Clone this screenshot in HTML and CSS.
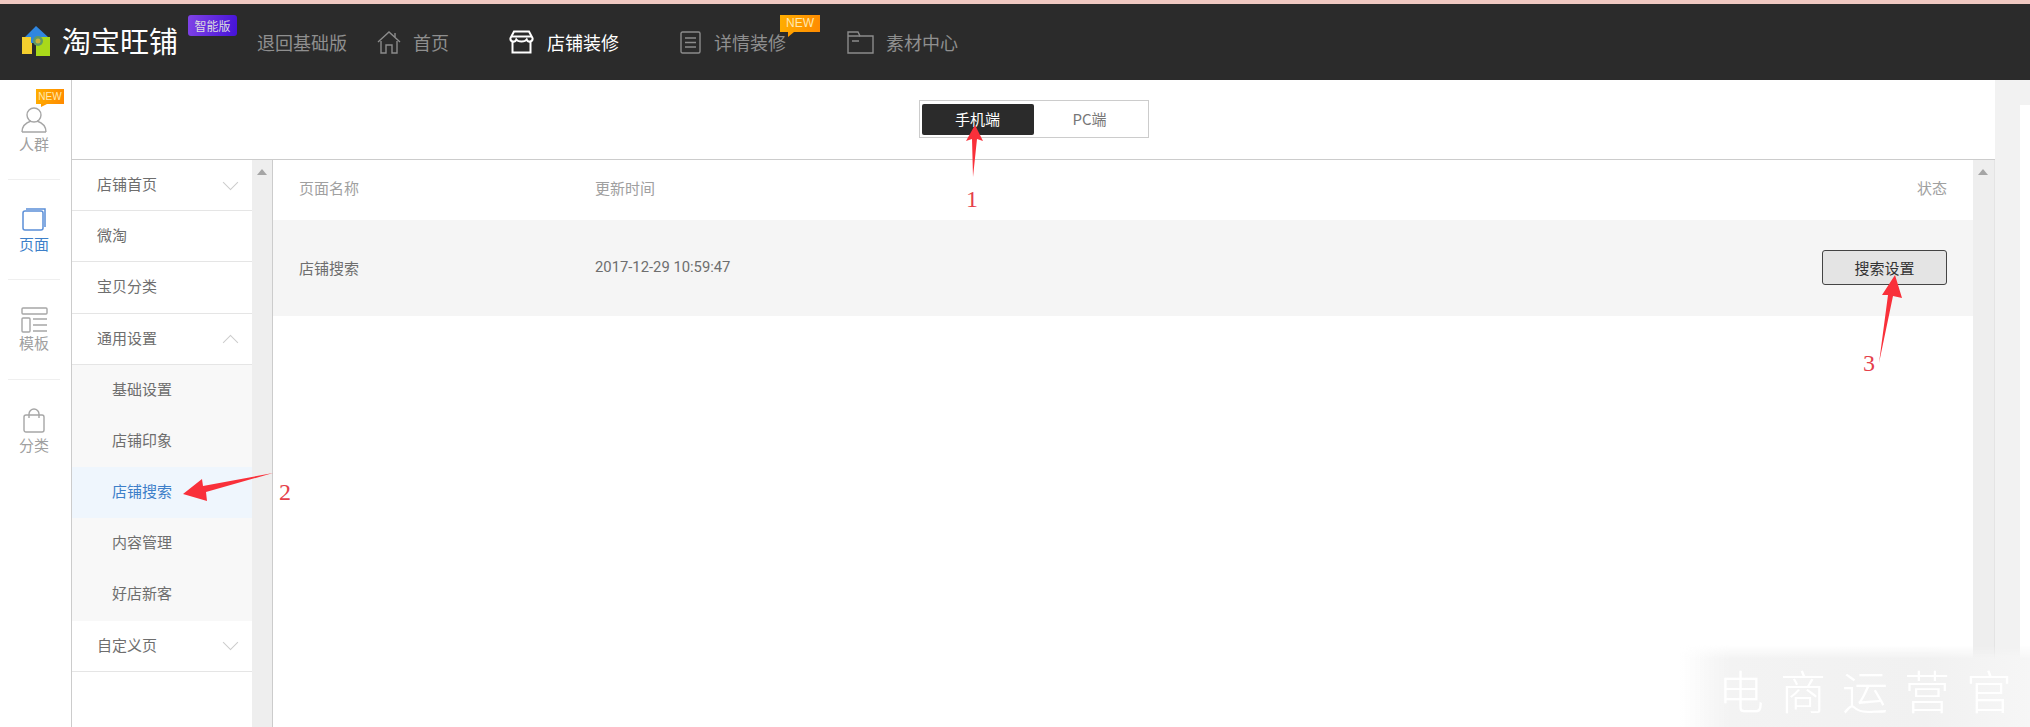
FILE: index.html
```html
<!DOCTYPE html>
<html lang="en">

<head>
    <meta charset="UTF-8">
    <meta name="viewport" content="width=device-width, initial-scale=1.0">
    <title>店铺装修</title>
    <link rel="stylesheet" href="styles.css">
</head>

<body>
    <div class="topline"></div>

    <header class="header">
        <svg class="logo-icon" width="28" height="30" viewBox="0 0 28 30">
            <rect x="0" y="11" width="10" height="17" fill="#f5cf2e" />
            <rect x="14" y="11" width="14" height="19" fill="#a9d91a" />
            <path d="M14 0 L26 11 L19 11 L19 17 L9 17 L9 11 L3 11 Z" fill="#2f86e0" />
            <circle cx="16" cy="15" r="5" fill="#5f9a66" />
            <circle cx="16" cy="15" r="2.5" fill="#c9b23a" />
        </svg>
        <span class="logo-text">淘宝旺铺</span>
        <span class="logo-badge">智能版</span>
        <a class="nav-back">退回基础版</a>

        <a class="nav-item nav-home">
            <svg width="24" height="23" viewBox="0 0 24 23" fill="none" stroke="#8c8c8c" stroke-width="1.4">
                <path d="M1 11 L12 1 L23 11" />
                <path d="M4 10 V22 H9 V14 H15 V22 H20 V10" />
                <path d="M18 2 V6" />
            </svg>
            首页
        </a>
        <a class="nav-item nav-shop active">
            <svg width="25" height="24" viewBox="0 0 25 24" fill="none" stroke="#fff" stroke-width="2">
                <path d="M5 1.5 H20 L23.5 8 A3 3 0 0 1 17.7 9.5 A5.5 3 0 0 1 7.3 9.5 A3 3 0 0 1 1.5 8 Z" />
                <path d="M3.5 11 V22.5 H21.5 V11" />
                <path d="M3 6.5 H22" />
            </svg>
            店铺装修
        </a>
        <a class="nav-item nav-detail">
            <svg width="21" height="23" viewBox="0 0 21 23" fill="none" stroke="#8c8c8c" stroke-width="1.4">
                <rect x="1" y="1" width="19" height="21" rx="1.5" />
                <path d="M5 7 H16 M5 11.500 H16 M5 16 H16" />
            </svg>
            详情装修
            <span class="new-tag nav-new">NEW</span>
        </a>
        <a class="nav-item nav-material">
            <svg width="27" height="23" viewBox="0 0 27 23" fill="none" stroke="#8c8c8c" stroke-width="1.4">
                <path d="M1 22 V1 H11 L13 5 H26 V22 Z" />
                <path d="M1 5 H13 M5 10 H12" />
            </svg>
            素材中心
        </a>
    </header>

    <div class="workspace">
        <aside class="rail">
            <div class="rail-item rail-first">
                <span class="new-tag rail-new">NEW</span>
                <svg width="26" height="26" viewBox="0 0 26 26" fill="none" stroke="#a6a6a6" stroke-width="1.4">
                    <circle cx="13" cy="8" r="7" />
                    <path d="M1 25 C1 17 7 15 10 14 M25 25 C25 17 19 15 16 14 M1 25 H25" />
                </svg>
                <span>人群</span>
            </div>
            <div class="rail-item selected">
                <svg width="24" height="23" viewBox="0 0 24 23" fill="none" stroke="#5b8fd8" stroke-width="1.5">
                    <rect x="1" y="3" width="20" height="19" rx="2" />
                    <path d="M4 1 H23 V19" />
                </svg>
                <span>页面</span>
            </div>
            <div class="rail-item rail-tpl">
                <svg width="27" height="26" viewBox="0 0 27 26" fill="none" stroke="#a6a6a6" stroke-width="1.4">
                    <rect x="1" y="1" width="25" height="6" rx="1" />
                    <rect x="1" y="11" width="8" height="14" rx="1" />
                    <path d="M12 12 H26 M12 18 H26 M12 24 H26" />
                </svg>
                <span>模板</span>
            </div>
            <div class="rail-item">
                <svg width="22" height="25" viewBox="0 0 22 25" fill="none" stroke="#a6a6a6" stroke-width="1.4">
                    <rect x="1" y="7" width="20" height="17" rx="2" />
                    <path d="M6 10 V6 A5 5 0 0 1 16 6 V10" />
                </svg>
                <span>分类</span>
            </div>
        </aside>

        <div class="content">
            <div class="toolbar">
                <div class="switch">
                    <span class="switch-btn on">手机端</span>
                    <span class="switch-btn">PC端</span>
                </div>
            </div>

            <div class="panels">
                <nav class="menu">
                    <a class="menu-row">店铺首页<i class="chev down"></i></a>
                    <a class="menu-row">微淘</a>
                    <a class="menu-row">宝贝分类</a>
                    <a class="menu-row">通用设置<i class="chev up"></i></a>
                    <div class="submenu">
                        <a class="sub-row">基础设置</a>
                        <a class="sub-row">店铺印象</a>
                        <a class="sub-row current">店铺搜索</a>
                        <a class="sub-row">内容管理</a>
                        <a class="sub-row">好店新客</a>
                    </div>
                    <a class="menu-row">自定义页<i class="chev down"></i></a>
                </nav>
                <div class="scrollbar"><i class="scroll-up"></i></div>

                <main class="table">
                    <div class="table-head">
                        <span>页面名称</span>
                        <span>更新时间</span>
                        <span>状态</span>
                    </div>
                    <div class="table-row">
                        <span>店铺搜索</span>
                        <span class="date">2017-12-29 10:59:47</span>
                        <button class="btn">搜索设置</button>
                    </div>
                </main>
                <div class="scrollbar scrollbar-right"><i class="scroll-up"></i></div>
            </div>
        </div>

        <div class="gutter">
            <div class="gutter-page"></div>
        </div>
    </div>

    <!-- red notes drawn over the screen -->
    <svg class="arrows" width="2030" height="727" viewBox="0 0 2030 727">
        <path d="M975 125 L983 141 L977 139 L973 177 L972 139 L966 141 Z" fill="#f9303a" />
        <path d="M183 494 L202 479 L203 486 L273 473 L206 492 L207 501 Z" fill="#f9303a" />
        <path d="M1895 275 L1902 298 L1893 296 L1879 363 L1888 295 L1882 295 Z" fill="#f9303a" />
    </svg>
    <span class="note note-1">1</span>
    <span class="note note-2">2</span>
    <span class="note note-3">3</span>

    <div class="watermark">电商运营官</div>
</body>

</html>
```

FILE: styles.css
```css
* {
    padding: 0;
    margin: 0;
    box-sizing: border-box;
}

body {
    width: 2030px;
    height: 727px;
    overflow: hidden;
    position: relative;
    display: flex;
    flex-direction: column;
    background-color: #fff;
    font-family: "Noto Sans CJK SC", "Noto Sans", sans-serif;
    font-size: 15px;
    color: #6e6e6e;
}

i {
    display: block;
}

.topline {
    height: 4px;
    background-color: #f0c9c2;
}

/* header */
.header {
    height: 76px;
    background-color: #2b2b2b;
    display: flex;
    align-items: center;
    position: relative;
    padding-left: 22px;
    color: #8f8f8f;
    font-size: 18px;
}

.logo-icon {
    margin-top: -2px;
}

.logo-text {
    margin-left: 12px;
    width: 115px;
    font-size: 29px;
    line-height: 30px;
    color: #fff;
    white-space: nowrap;
    margin-top: -4px;
}

.logo-badge {
    align-self: flex-start;
    margin: 11px 0 0 11px;
    width: 49px;
    height: 21px;
    border-radius: 3px;
    background: linear-gradient(100deg, #8043e6, #4512d8);
    color: #ddd;
    font-size: 12px;
    line-height: 21px;
    text-align: center;
}

.nav-back {
    margin-left: 20px;
    width: 120px;
}

.nav-item {
    display: flex;
    align-items: center;
    gap: 12px;
    position: relative;
    white-space: nowrap;
}

.nav-shop {
    margin-left: 60px;
    gap: 13px;
}

.nav-detail {
    margin-left: 61px;
    gap: 13px;
}

.nav-material {
    margin-left: 61px;
    gap: 12px;
}

.nav-item.active {
    color: #fff;
}

.new-tag {
    position: absolute;
    background: linear-gradient(100deg, #ffae00, #ff8a00);
    color: #ffe9b0;
    font-family: "Liberation Sans", sans-serif;
    text-align: center;
}

.new-tag::after {
    content: "";
    position: absolute;
    left: 8px;
    top: 100%;
    border-top: 5px solid #ff9c00;
    border-right: 6px solid transparent;
}

.nav-new {
    left: 100px;
    top: -14px;
    width: 40px;
    height: 17px;
    font-size: 12px;
    line-height: 17px;
}

/* left icon rail */
.workspace {
    flex: 1;
    display: flex;
    min-height: 0;
}

.rail {
    width: 72px;
    border-right: 1px solid #ccc;
    padding: 0 11px 0 8px;
    flex-shrink: 0;
}

.rail-item {
    height: 100px;
    display: flex;
    flex-direction: column;
    align-items: center;
    padding-top: 28px;
    position: relative;
    border-bottom: 1px solid #efefef;
    color: #a0a0a0;
    font-size: 15px;
    line-height: 22px;
}

.rail-item svg {
    flex-shrink: 0;
    margin-bottom: 1px;
}

.rail-first {
    padding-top: 27px;
}

.rail-first span:last-child {
    margin-top: -1px;
}

.rail-item.selected span {
    margin-top: 1px;
}

.rail-tpl {
    padding-top: 27px;
}

.rail-tpl svg {
    margin-bottom: -1px;
}

.rail-item:last-child {
    border-bottom: none;
}

.rail-item.selected {
    color: #3d7fc9;
}

.rail-new {
    left: 28px;
    top: 9px;
    width: 28px;
    height: 15px;
    font-size: 10px;
    line-height: 15px;
}

.rail-new::after {
    left: 5px;
    border-top-width: 3px;
}

/* middle part */
.content {
    width: 1923px;
    flex-shrink: 0;
    display: flex;
    flex-direction: column;
}

.toolbar {
    height: 80px;
    border-bottom: 1px solid #ccc;
    display: flex;
    justify-content: center;
    align-items: center;
    padding-bottom: 2px;
}

.switch {
    width: 230px;
    height: 38px;
    border: 1px solid #ccc;
    padding: 3px 2px;
    display: flex;
}

.switch-btn {
    width: 113px;
    text-align: center;
    line-height: 29px;
    height: 31px;
    color: #777;
}

.switch-btn.on {
    background-color: #2b2b2b;
    color: #fff;
    border-radius: 2px;
}

.panels {
    flex: 1;
    display: flex;
    min-height: 0;
}

.menu {
    width: 180px;
}

.menu-row {
    height: 51.2px;
    padding: 0 0 3px 25px;
    display: flex;
    align-items: center;
    justify-content: space-between;
    border-bottom: 1px solid #e5e5e5;
    background-color: #fff;
}

.chev {
    width: 11px;
    height: 11px;
    margin-right: 16px;
    border-left: 1px solid #ccc;
    border-bottom: 1px solid #ccc;
    transform: rotate(-45deg);
}

.chev.down {
    margin-top: -3px;
}

.chev.up {
    margin-top: 11px;
    transform: rotate(135deg);
}

.submenu {
    background-color: #f8f8f8;
    border-bottom: 1px solid #f8f8f8;
}

.sub-row {
    height: 51px;
    padding: 0 0 3px 40px;
    display: flex;
    align-items: center;
}

.sub-row.current {
    background-color: #eff6fd;
    color: #3d7fc9;
}

.scrollbar {
    width: 21px;
    background-color: #eee;
    border-right: 1px solid #ccc;
    flex-shrink: 0;
    padding-top: 9px;
}

.scrollbar-right {
    width: 22px;
    border-right: 1px solid #e4e4e4;
}

.scroll-up {
    width: 0;
    margin-left: 5px;
    border-left: 5px solid transparent;
    border-right: 5px solid transparent;
    border-bottom: 6px solid #a5a5a5;
}

/* table */
.table {
    flex: 1;
}

.table-head,
.table-row {
    display: grid;
    grid-template-columns: 296px 1fr auto;
    align-items: center;
    padding: 0 26px;
}

.table-head {
    height: 60px;
    padding-bottom: 6px;
    color: #a0a0a0;
}

.table-row {
    height: 96px;
    padding-bottom: 2px;
    background-color: #f5f5f5;
}

.date {
    font-family: Roboto, sans-serif;
    font-size: 14.8px;
}

.btn {
    width: 125px;
    height: 35px;
    background-color: #e4e4e4;
    border: 1px solid #444;
    border-radius: 3px;
    color: #333;
    font-family: inherit;
    font-size: 15px;
}

/* right side */
.gutter {
    flex: 1;
    background-color: #f2f2f2;
    padding: 25px 0 0 25px;
}

.gutter-page {
    height: 100%;
    background-color: #fff;
}

/* overlays */
.arrows {
    position: absolute;
    left: 0;
    top: 0;
}

.note {
    position: absolute;
    font-family: "Liberation Serif", serif;
    font-size: 24px;
    line-height: 24px;
    color: #e5404a;
}

.note-1 {
    left: 966px;
    top: 187px;
}

.note-2 {
    left: 279px;
    top: 480px;
}

.note-3 {
    left: 1863px;
    top: 351px;
}

.watermark {
    position: absolute;
    left: 1680px;
    top: 645px;
    width: 350px;
    height: 82px;
    padding: 8px 0 0 38px;
    background: linear-gradient(90deg, rgba(244, 244, 244, 0), #f3f3f3 14%, #f1f1f1 70%, #f6f6f6 100%);
    -webkit-mask-image: linear-gradient(180deg, transparent, #000 14px);
    mask-image: linear-gradient(180deg, transparent, #000 14px);
    color: #fff;
    font-size: 46px;
    font-weight: 300;
    letter-spacing: 16px;
    line-height: 72px;
    white-space: nowrap;
    overflow: hidden;
}
```
